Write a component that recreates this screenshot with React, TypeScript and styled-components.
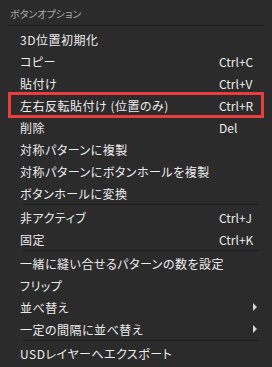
import {createGlobalStyle, styled} from "styled-components";

const GlobalStyle = createGlobalStyle`
    html, body {
        margin: 0;
        padding: 0;
        background: #2b2b2b;
    }
`

const Menu = styled.div`
    width: 272px;
    height: 367px;
    background: #2b2b2b;
    font-family: "Noto Sans CJK JP", "Noto Sans", sans-serif;
    font-feature-settings: "palt";
    color: #ececec;
    box-sizing: border-box;
    overflow: hidden;
`

const Header = styled.div`
    height: 26px;
    margin: 0 8px 2px 8px;
    padding: 1px 0 0 2px;
    display: flex;
    align-items: center;
    font-size: 10px;
    color: #a9a9a9;
    border-bottom: 1px solid #1d1d1d;
    box-sizing: border-box;
`

const Row = styled.div<{ $marked?: boolean }>`
    height: 22px;
    margin: 0 10px;
    padding-left: 10px;
    display: grid;
    grid-template-columns: 1fr 43px;
    align-items: center;
    font-size: 12px;
    white-space: nowrap;
    outline: ${(p) => (p.$marked ? "3px solid #ea3d3d" : "none")};
    outline-offset: -1px;
`

const Label = styled.span`
    letter-spacing: 0.5px;
`

const Shortcut = styled.span`
    font-size: 12px;
`

const Arrow = styled.span`
    justify-self: end;
    margin-right: 5px;
    width: 0;
    height: 0;
    border-top: 4px solid transparent;
    border-bottom: 4px solid transparent;
    border-left: 4px solid #d4d4d4;
`

const Separator = styled.div`
    height: 0;
    margin: 0 13px 1px 23px;
    border-top: 1px solid #1d1d1d;
`

type Item = { label: string; key?: string; sub?: boolean; marked?: boolean; sep?: boolean };

const items: Item[] = [
    {label: "3D位置初期化"},
    {label: "コピー", key: "Ctrl+C"},
    {label: "貼付け", key: "Ctrl+V"},
    {label: "左右反転貼付け (位置のみ)", key: "Ctrl+R", marked: true},
    {label: "削除", key: "Del"},
    {label: "対称パターンに複製"},
    {label: "対称パターンにボタンホールを複製"},
    {label: "ボタンホールに変換", sep: true},
    {label: "非アクティブ", key: "Ctrl+J"},
    {label: "固定", key: "Ctrl+K", sep: true},
    {label: "一緒に縫い合せるパターンの数を設定"},
    {label: "フリップ"},
    {label: "並べ替え", sub: true},
    {label: "一定の間隔に並べ替え", sub: true, sep: true},
    {label: "USDレイヤーへエクスポート"},
];

export default function App() {
    return (
        <>
            <GlobalStyle/>
            <Menu>
                <Header>ボタンオプション</Header>
                {items.map((it) => (
                    <div key={it.label}>
                        <Row $marked={it.marked}>
                            <Label>{it.label}</Label>
                            {it.sub ? <Arrow/> : <Shortcut>{it.key ?? ""}</Shortcut>}
                        </Row>
                        {it.sep && <Separator/>}
                    </div>
                ))}
            </Menu>
        </>
    )
}
